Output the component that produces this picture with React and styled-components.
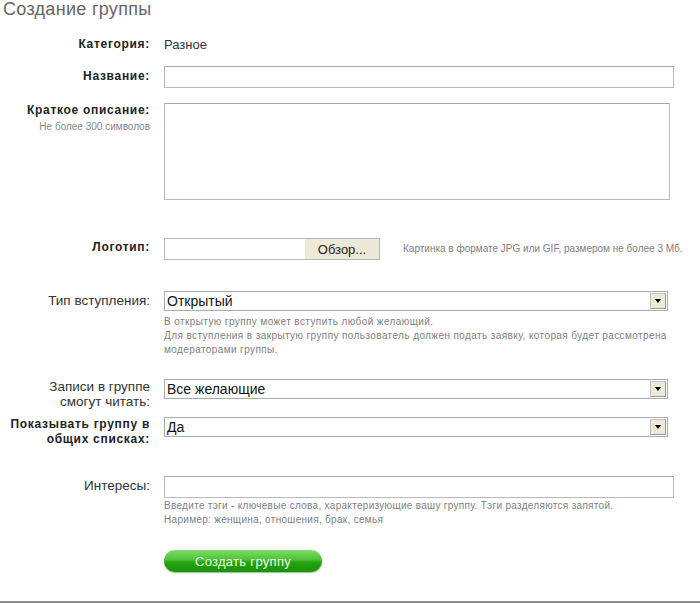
import React from "react";
import styled, { createGlobalStyle } from "styled-components";

const GlobalStyle = createGlobalStyle`
  html, body {
    margin: 0;
    padding: 0;
    background: #fff;
  }
  body {
    font-family: "Liberation Sans", Arial, sans-serif;
    color: #333;
  }
`;

const Page = styled.div`
  width: 700px;
  height: 603px;
  position: relative;
  overflow: hidden;
  border-bottom: 2px solid #8c8c8c;
  box-sizing: border-box;
`;

const Title = styled.h1`
  margin: 0;
  padding: 0 0 0 3px;
  font-size: 18px;
  line-height: 18px;
  font-weight: normal;
  color: #666;
  letter-spacing: 0.3px;
`;

const Row = styled.div`
  display: flex;
  align-items: flex-start;
  margin-top: ${(p) => p.$top}px;
`;

const Label = styled.div`
  width: 150px;
  flex-shrink: 0;
  text-align: right;
  padding-right: 14px;
  padding-top: ${(p) => p.$pad || 0}px;
  font-size: ${(p) => (p.$bold ? 12 : 13.5)}px;
  font-weight: ${(p) => (p.$bold ? "bold" : "normal")};
  color: ${(p) => (p.$bold ? "#222" : "#333")};
  line-height: 15px;
  letter-spacing: ${(p) => (p.$bold ? 0.7 : 0)}px;
`;

const SubLabel = styled.div`
  font-size: 10px;
  font-weight: normal;
  color: #888;
  margin-top: 1px;
  letter-spacing: 0;
`;

const Field = styled.div`
  display: flex;
  flex-direction: column;
`;

const Value = styled.div`
  font-size: 13px;
  color: #333;
  line-height: 15px;
`;

const TextInput = styled.div`
  width: ${(p) => p.$w}px;
  height: ${(p) => p.$h}px;
  border: 1px solid #b8b8b8;
  border-top-color: #a8a8a8;
  background: #fff;
  box-sizing: border-box;
`;

const FileBox = styled.div`
  display: flex;
  align-items: center;
  gap: 23px;
`;

const FileInput = styled.div`
  display: flex;
  width: 216px;
  height: 22px;
  border: 1px solid #b8b8b8;
  box-sizing: border-box;
`;

const FileText = styled.div`
  flex: 1;
  background: #fff;
`;

const Browse = styled.div`
  width: 74px;
  background: #ece9d8;
  font-size: 13px;
  color: #222;
  display: flex;
  align-items: center;
  justify-content: center;
`;

const Hint = styled.div`
  font-size: 10px;
  line-height: 14px;
  color: #808080;
  letter-spacing: ${(p) => p.$ls || 0}px;
  margin-top: ${(p) => p.$top || 0}px;
`;

const SelectBox = styled.div`
  display: flex;
  width: 504px;
  height: 20px;
  border: 1px solid #a5acb2;
  box-sizing: border-box;
  background: #fff;
`;

const SelectText = styled.div`
  flex: 1;
  font-size: 14px;
  line-height: 18px;
  padding-left: 2px;
  color: #111;
`;

const Arrow = styled.div`
  width: 16px;
  margin: 1px;
  background: #ece9d8;
  border: 1px solid #c8c4b4;
  border-right-color: #9a9888;
  border-bottom-color: #9a9888;
  box-sizing: border-box;
  display: flex;
  align-items: center;
  justify-content: center;
  &::after {
    content: "";
    border-left: 3px solid transparent;
    border-right: 3px solid transparent;
    border-top: 4px solid #000;
  }
`;

const CreateButton = styled.button`
  width: 158px;
  height: 22px;
  border: none;
  border-radius: 11px;
  background: linear-gradient(#80dc6c 0%, #4cc034 45%, #26a412 55%, #1c900c 100%);
  box-shadow: 0 1px 1px #9bbf93;
  color: #eaffe4;
  font-family: "Liberation Sans", Arial, sans-serif;
  font-size: 13px;
  letter-spacing: 0.3px;
  padding: 0;
  cursor: pointer;
`;

const Select = ({ value }) => (
  <SelectBox>
    <SelectText>{value}</SelectText>
    <Arrow />
  </SelectBox>
);

export default function App() {
  return (
    <Page>
      <GlobalStyle />
      <Title>Создание группы</Title>

      <Row $top={19}>
        <Label $bold>Категория:</Label>
        <Value>Разное</Value>
      </Row>

      <Row $top={14}>
        <Label $bold $pad={3}>Название:</Label>
        <TextInput $w={510} $h={22} />
      </Row>

      <Row $top={15}>
        <Label $bold>
          Краткое описание:
          <SubLabel>Не более 300 символов</SubLabel>
        </Label>
        <TextInput $w={506} $h={97} />
      </Row>

      <Row $top={38}>
        <Label $bold $pad={2}>Логотип:</Label>
        <FileBox>
          <FileInput>
            <FileText />
            <Browse>Обзор...</Browse>
          </FileInput>
          <Hint>Картинка в формате JPG или GIF, размером не более 3 Мб.</Hint>
        </FileBox>
      </Row>

      <Row $top={31}>
        <Label $pad={2}>Тип вступления:</Label>
        <Field>
          <Select value="Открытый" />
          <Hint $top={4} $ls={0.4}>
            В открытую группу может вступить любой желающий.
            <br />
            Для вступления в закрытую группу пользователь должен подать заявку, которая будет рассмотрена
            <br />
            модераторами группы.
          </Hint>
        </Field>
      </Row>

      <Row $top={22}>
        <Label>
          Записи в группе
          <br />
          смогут читать:
        </Label>
        <Select value="Все желающие" />
      </Row>

      <Row $top={8}>
        <Label $bold>
          Показывать группу в
          <br />
          общих списках:
        </Label>
        <Select value="Да" />
      </Row>

      <Row $top={29}>
        <Label $pad={2}>Интересы:</Label>
        <Field>
          <TextInput $w={510} $h={22} />
          <Hint $top={1} $ls={0.3}>
            Введите тэги - ключевые слова, характеризующие вашу группу. Тэги разделяются запятой.
            <br />
            Наример: женщина, отношения, брак, семья
          </Hint>
        </Field>
      </Row>

      <Row $top={23}>
        <Label />
        <CreateButton>Создать группу</CreateButton>
      </Row>
    </Page>
  );
}
